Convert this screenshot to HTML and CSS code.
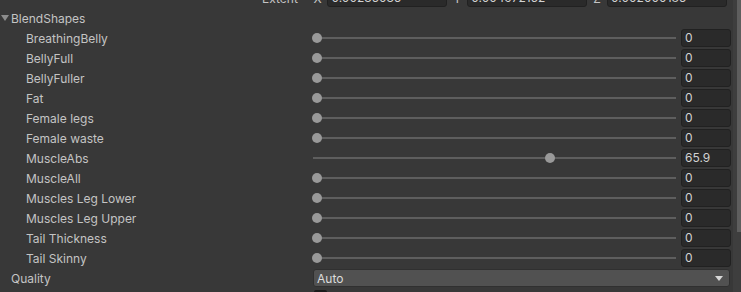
FILE: index.html
```html
<!DOCTYPE html>
<html lang="en">
<head>
  <meta charset="UTF-8">
  <title>Inspector - BlendShapes</title>
  <link rel="stylesheet" href="styles.css">
</head>
<body>
  <div class="inspector">
    <div class="content">
      <div class="extent-row">
        <span class="extent-label">Extent</span>
        <span class="axis">X</span>
        <div class="field vec">0.00235035</div>
        <span class="axis">Y</span>
        <div class="field vec">0.004972152</div>
        <span class="axis">Z</span>
        <div class="field vec">0.002000185</div>
      </div>

      <div class="foldout">
        <span class="fold-arrow"></span>
        <span>BlendShapes</span>
      </div>

      <div class="row">
        <span class="label">BreathingBelly</span>
        <div class="slider"><div class="track"></div><div class="lane"><div class="thumb" style="left: 0%"></div></div></div>
        <div class="field">0</div>
      </div>
      <div class="row">
        <span class="label">BellyFull</span>
        <div class="slider"><div class="track"></div><div class="lane"><div class="thumb" style="left: 0%"></div></div></div>
        <div class="field">0</div>
      </div>
      <div class="row">
        <span class="label">BellyFuller</span>
        <div class="slider"><div class="track"></div><div class="lane"><div class="thumb" style="left: 0%"></div></div></div>
        <div class="field">0</div>
      </div>
      <div class="row">
        <span class="label">Fat</span>
        <div class="slider"><div class="track"></div><div class="lane"><div class="thumb" style="left: 0%"></div></div></div>
        <div class="field">0</div>
      </div>
      <div class="row">
        <span class="label">Female legs</span>
        <div class="slider"><div class="track"></div><div class="lane"><div class="thumb" style="left: 0%"></div></div></div>
        <div class="field">0</div>
      </div>
      <div class="row">
        <span class="label">Female waste</span>
        <div class="slider"><div class="track"></div><div class="lane"><div class="thumb" style="left: 0%"></div></div></div>
        <div class="field">0</div>
      </div>
      <div class="row">
        <span class="label">MuscleAbs</span>
        <div class="slider"><div class="track"></div><div class="lane"><div class="thumb" style="left: 65.9%"></div></div></div>
        <div class="field">65.9</div>
      </div>
      <div class="row">
        <span class="label">MuscleAll</span>
        <div class="slider"><div class="track"></div><div class="lane"><div class="thumb" style="left: 0%"></div></div></div>
        <div class="field">0</div>
      </div>
      <div class="row">
        <span class="label">Muscles Leg Lower</span>
        <div class="slider"><div class="track"></div><div class="lane"><div class="thumb" style="left: 0%"></div></div></div>
        <div class="field">0</div>
      </div>
      <div class="row">
        <span class="label">Muscles Leg Upper</span>
        <div class="slider"><div class="track"></div><div class="lane"><div class="thumb" style="left: 0%"></div></div></div>
        <div class="field">0</div>
      </div>
      <div class="row">
        <span class="label">Tail Thickness</span>
        <div class="slider"><div class="track"></div><div class="lane"><div class="thumb" style="left: 0%"></div></div></div>
        <div class="field">0</div>
      </div>
      <div class="row">
        <span class="label">Tail Skinny</span>
        <div class="slider"><div class="track"></div><div class="lane"><div class="thumb" style="left: 0%"></div></div></div>
        <div class="field">0</div>
      </div>

      <div class="row top-level">
        <span class="label">Quality</span>
        <div class="dropdown">
          <span>Auto</span>
          <span class="drop-arrow"></span>
        </div>
      </div>

      <div class="row top-level">
        <span class="label"></span>
        <div class="checkbox"></div>
      </div>
    </div>

    <div class="scrollbar">
      <div class="scroll-thumb"></div>
    </div>
  </div>
</body>
</html>
```

FILE: styles.css
```css
* {
  box-sizing: border-box;
}

body {
  margin: 0;
  background-color: #383838;
  font-family: Inter, "Noto Sans", sans-serif;
  font-size: 12px;
  color: #c4c4c4;
  overflow: hidden;
}

.inspector {
  display: flex;
  height: 292px;
  overflow: hidden;
}

.content {
  width: 733px;
  height: 292px;
  overflow: hidden;
}

.extent-row {
  display: flex;
  align-items: center;
  height: 20px;
  margin-top: -12px;
  padding-left: 262px;
}

.extent-label {
  width: 52px;
}

.axis {
  width: 14px;
}

.field {
  height: 18px;
  line-height: 16px;
  padding-left: 3px;
  background-color: #2a2a2a;
  border: 1px solid #212121;
  border-radius: 3px;
  color: #d2d2d2;
  white-space: nowrap;
  overflow: hidden;
}

.field.vec {
  width: 121px;
  margin-right: 6px;
}

.foldout {
  display: flex;
  align-items: center;
  height: 20px;
  padding-left: 1px;
}

.fold-arrow {
  width: 0;
  height: 0;
  border-left: 4px solid transparent;
  border-right: 4px solid transparent;
  border-top: 6px solid #8c8c8c;
  margin-right: 2px;
}

.row {
  display: grid;
  grid-template-columns: 287px 363px 55px;
  align-items: center;
  height: 20px;
  padding-left: 26px;
}

.row .field {
  margin-left: 5px;
}

.row.top-level {
  grid-template-columns: 302px 417px;
  padding-left: 11px;
}

.label {
  white-space: nowrap;
}

.slider {
  position: relative;
  height: 20px;
}

.track {
  position: absolute;
  left: 0;
  right: 0;
  top: 9px;
  height: 2px;
  background-color: #5e5e5e;
}

.lane {
  position: absolute;
  left: -1px;
  right: 10px;
  top: 0;
  height: 20px;
}

.thumb {
  position: absolute;
  top: 5px;
  width: 10px;
  height: 10px;
  border-radius: 50%;
  background-color: #999999;
}

.dropdown {
  display: flex;
  align-items: center;
  justify-content: space-between;
  height: 18px;
  padding: 0 6px 0 3px;
  background-color: #515151;
  border: 1px solid #303030;
  border-radius: 3px;
  color: #dcdcdc;
}

.drop-arrow {
  width: 0;
  height: 0;
  border-left: 4px solid transparent;
  border-right: 4px solid transparent;
  border-top: 5px solid #d8d8d8;
}

.checkbox {
  width: 13px;
  height: 14px;
  margin-top: 2px;
  margin-left: 1px;
  background-color: #1b1b1b;
  border-radius: 2px;
  align-self: start;
}

.scrollbar {
  width: 8px;
  height: 292px;
  background-color: #3e3e3e;
  padding-left: 4px;
}

.scroll-thumb {
  height: 232px;
  background-color: #5e5e5e;
}
```
